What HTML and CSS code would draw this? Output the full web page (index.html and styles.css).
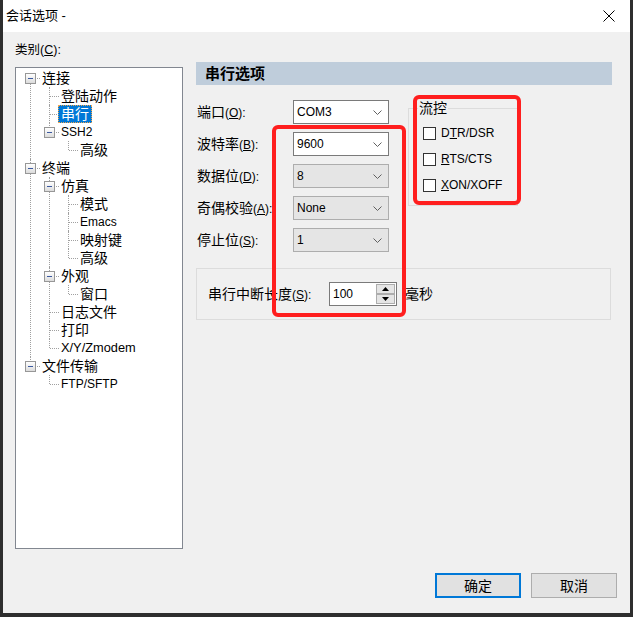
FILE: index.html
```html
<!DOCTYPE html>
<html>
<head>
<meta charset="utf-8">
<link rel="stylesheet" href="styles.css">
</head>
<body>
<div class="window">
  <div class="titlebar">
    <span class="title">会话选项 -</span>
    <svg class="close" width="12" height="12" viewBox="0 0 12 12"><path d="M0.5 0.5 L11.5 11.5 M11.5 0.5 L0.5 11.5" stroke="#000" stroke-width="1" fill="none"/></svg>
  </div>
  <div class="content">
    <div class="main">
      <div class="left">
        <div class="cat">类别<span class="en">(<u>C</u>):</span></div>
        <div class="treebox">
          <ul class="tree">
            <li>
              <div class="row"><i class="exp"></i><span class="lbl">连接</span></div>
              <ul>
                <li><div class="row"><span class="lbl">登陆动作</span></div></li>
                <li><div class="row"><span class="lbl sel">串行</span></div></li>
                <li>
                  <div class="row"><i class="exp"></i><span class="lbl en">SSH2</span></div>
                  <ul>
                    <li><div class="row"><span class="lbl">高级</span></div></li>
                  </ul>
                </li>
              </ul>
            </li>
            <li>
              <div class="row"><i class="exp"></i><span class="lbl">终端</span></div>
              <ul>
                <li>
                  <div class="row"><i class="exp"></i><span class="lbl">仿真</span></div>
                  <ul>
                    <li><div class="row"><span class="lbl">模式</span></div></li>
                    <li><div class="row"><span class="lbl en">Emacs</span></div></li>
                    <li><div class="row"><span class="lbl">映射键</span></div></li>
                    <li><div class="row"><span class="lbl">高级</span></div></li>
                  </ul>
                </li>
                <li>
                  <div class="row"><i class="exp"></i><span class="lbl">外观</span></div>
                  <ul>
                    <li><div class="row"><span class="lbl">窗口</span></div></li>
                  </ul>
                </li>
                <li><div class="row"><span class="lbl">日志文件</span></div></li>
                <li><div class="row"><span class="lbl">打印</span></div></li>
                <li><div class="row"><span class="lbl en wide">X/Y/Zmodem</span></div></li>
              </ul>
            </li>
            <li>
              <div class="row"><i class="exp"></i><span class="lbl">文件传输</span></div>
              <ul>
                <li><div class="row"><span class="lbl en">FTP/SFTP</span></div></li>
              </ul>
            </li>
          </ul>
        </div>
      </div>
      <div class="right">
        <div class="header">串行选项</div>
        <div class="upper">
          <div class="form">
            <div class="frow"><span class="flabel">端口<span class="en">(<u>O</u>):</span></span><div class="combo edit"><span class="en">COM3</span><svg class="chev" width="9" height="5" viewBox="0 0 9 5"><path d="M0.5 0.5 L4.5 4.5 L8.5 0.5" stroke="#606060" fill="none"/></svg></div></div>
            <div class="frow"><span class="flabel">波特率<span class="en">(<u>B</u>):</span></span><div class="combo edit"><span class="en">9600</span><svg class="chev" width="9" height="5" viewBox="0 0 9 5"><path d="M0.5 0.5 L4.5 4.5 L8.5 0.5" stroke="#606060" fill="none"/></svg></div></div>
            <div class="frow"><span class="flabel">数据位<span class="en">(<u>D</u>):</span></span><div class="combo"><span class="en">8</span><svg class="chev" width="9" height="5" viewBox="0 0 9 5"><path d="M0.5 0.5 L4.5 4.5 L8.5 0.5" stroke="#606060" fill="none"/></svg></div></div>
            <div class="frow"><span class="flabel">奇偶校验<span class="en">(<u>A</u>):</span></span><div class="combo"><span class="en">None</span><svg class="chev" width="9" height="5" viewBox="0 0 9 5"><path d="M0.5 0.5 L4.5 4.5 L8.5 0.5" stroke="#606060" fill="none"/></svg></div></div>
            <div class="frow"><span class="flabel">停止位<span class="en">(<u>S</u>):</span></span><div class="combo"><span class="en">1</span><svg class="chev" width="9" height="5" viewBox="0 0 9 5"><path d="M0.5 0.5 L4.5 4.5 L8.5 0.5" stroke="#606060" fill="none"/></svg></div></div>
          </div>
          <fieldset class="flow">
            <legend>流控</legend>
            <div class="chk"><span class="box"></span><span class="en">D<u>T</u>R/DSR</span></div>
            <div class="chk"><span class="box"></span><span class="en"><u>R</u>TS/CTS</span></div>
            <div class="chk"><span class="box"></span><span class="en"><u>X</u>ON/XOFF</span></div>
          </fieldset>
        </div>
        <div class="break">
          <span class="blabel">串行中断长度<span class="en">(<u>S</u>):</span></span>
          <div class="spin">
            <span class="spinval en">100</span>
            <div class="spinbtns">
              <span class="sb"><svg width="7" height="4" viewBox="0 0 7 4"><polygon points="3.5,0 7,4 0,4" fill="#000"/></svg></span>
              <span class="sb"><svg width="7" height="4" viewBox="0 0 7 4"><polygon points="0,0 7,0 3.5,4" fill="#000"/></svg></span>
            </div>
          </div>
          <span class="unit">毫秒</span>
        </div>
      </div>
    </div>
    <div class="footer">
      <button class="btn primary">确定</button>
      <button class="btn">取消</button>
    </div>
  </div>
  <div class="mark m1"></div>
  <div class="mark m2"></div>
</div>
</body>
</html>
```

FILE: styles.css
```css
* { box-sizing: border-box; }
html, body { margin: 0; padding: 0; }
body {
  background: #2e2e2e;
  width: 633px;
  height: 617px;
  overflow: hidden;
  font-family: "Liberation Sans", "Noto Sans CJK SC", sans-serif;
  font-size: 14px;
  color: #000;
}
.en { font-size: 12px; }
u { text-decoration: underline; text-underline-offset: 1px; }

.window {
  position: relative;
  margin-left: 3px;
  width: 627px;
  height: 613px;
  background: #f0f0f0;
}
.titlebar {
  height: 32px;
  background: #fff;
  display: flex;
  align-items: center;
  justify-content: space-between;
  padding: 0 15px 0 3px;
}
.title { font-size: 13px; line-height: 16px; }
.close { display: block; }

.content { display: flex; flex-direction: column; }
.main { display: flex; gap: 13px; padding-left: 12px; }
.left { width: 168px; }
.cat { font-size: 12.5px; line-height: 18px; margin-top: 9px; height: 18px; }
.cat .en { font-size: 12.5px; }
.treebox {
  margin-top: 8px;
  height: 482px;
  background: #fff;
  border: 1px solid #828790;
  padding-top: 1px;
}
.tree, .tree ul { list-style: none; margin: 0; padding: 0; }
.tree ul { margin-left: 19px; }
.tree li { position: relative; }
.tree li::before {
  content: "";
  position: absolute;
  left: 14px;
  top: 0;
  bottom: 0;
  border-left: 1px dotted #a0a0a0;
}
.tree li:last-child::before { bottom: auto; height: 9px; }
.tree > li:first-child::before { top: 9px; }
.row {
  position: relative;
  height: 18px;
  padding-left: 26px;
  display: flex;
  align-items: center;
  white-space: nowrap;
}
.row::before {
  content: "";
  position: absolute;
  left: 15px;
  top: 9px;
  width: 9px;
  border-top: 1px dotted #a0a0a0;
}
.exp {
  position: absolute;
  left: 9px;
  top: 4px;
  width: 11px;
  height: 11px;
  border: 1px solid #979797;
  background: linear-gradient(#ffffff, #dcdcdc);
  z-index: 1;
}
.exp::after {
  content: "";
  position: absolute;
  left: 2px;
  top: 4px;
  width: 5px;
  height: 1px;
  background: #3c5aa0;
}
.lbl { line-height: 18px; }
.lbl.en { font-size: 12px; }
.lbl.en.wide { font-size: 12.8px; }
.sel {
  margin-left: -3px;
  padding: 0 2px;
  height: 18px;
  line-height: 16px;
  background: #0078d7;
  color: #fff;
  border: 1px dotted #f2a54a;
}

.right { width: 416px; }
.header {
  margin-top: 30px;
  height: 23px;
  background: #bfcddb;
  font-size: 15px;
  font-weight: bold;
  line-height: 23px;
  padding-left: 9px;
}
.upper { display: flex; gap: 19px; align-items: flex-start; margin-top: 15px; }
.form { width: 193px; display: flex; flex-direction: column; gap: 8px; }
.frow { display: flex; align-items: center; height: 24px; padding-left: 1px; }
.flabel { width: 96px; line-height: 18px; white-space: nowrap; }
.combo {
  width: 96px;
  height: 24px;
  border: 1px solid #adadad;
  background: #e5e5e5;
  display: flex;
  align-items: center;
  justify-content: space-between;
  padding: 0 6px 0 3px;
}
.combo.edit { background: #fff; border-color: #7a7a7a; }
.chev { display: block; }

.flow {
  margin: 0;
  width: 110px;
  border: 1px solid #dcdcdc;
  padding: 8px 4px 11px 9px;
  min-width: 0;
}
.flow legend { padding: 0 1px; line-height: 16px; font-size: 14px; }
.chk { display: flex; align-items: center; height: 18px; margin-left: 5px; gap: 5px; white-space: nowrap; }
.chk + .chk { margin-top: 8px; }
.box {
  width: 13px;
  height: 13px;
  border: 1px solid #333;
  background: #fff;
  flex: none;
}

.break {
  margin-top: 16px;
  width: 415px;
  height: 52px;
  border: 1px solid #dcdcdc;
  display: flex;
  align-items: center;
  padding-left: 11px;
}
.blabel { width: 121px; white-space: nowrap; line-height: 18px; }
.spin {
  display: flex;
  width: 68px;
  height: 24px;
  border: 1px solid #7a7a7a;
  background: #fff;
}
.spinval { flex: 1; padding-left: 3px; line-height: 22px; }
.spinbtns { width: 21px; display: flex; flex-direction: column; padding: 1px; gap: 0; }
.sb {
  flex: 1;
  display: flex;
  align-items: center;
  justify-content: center;
  background: #e5e5e5;
  border: 1px solid #adadad;
}
.sb svg { display: block; }
.unit { margin-left: 8px; line-height: 18px; }

.footer {
  display: flex;
  justify-content: flex-end;
  gap: 10px;
  padding-right: 13px;
  margin-top: 24px;
}
.btn {
  width: 86px;
  height: 25px;
  background: #e1e1e1;
  border: 1px solid #adadad;
  font-family: "Liberation Sans", "Noto Sans CJK SC", sans-serif;
  font-size: 14px;
  padding: 0;
  line-height: 20px;
  color: #000;
}
.btn.primary { border: 2px solid #0078d7; }

.mark {
  position: absolute;
  border: 4px solid #ff1e1e;
  border-radius: 6px;
}
.m1 { left: 269px; top: 125px; width: 134px; height: 192px; }
.m2 { left: 410px; top: 95px; width: 108px; height: 110px; }
```
